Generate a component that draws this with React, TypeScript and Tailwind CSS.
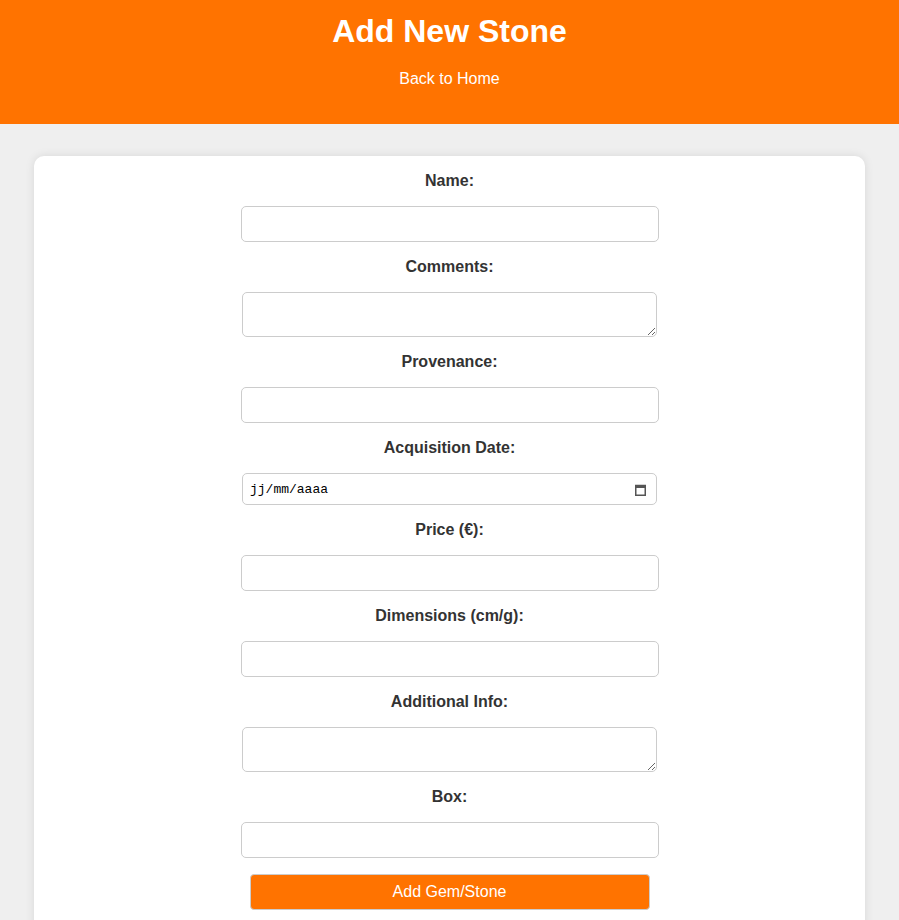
import React from "react";

const font = "font-['Liberation_Sans',Arial,sans-serif]";

const Label = ({ text, first }: { text: string; first?: boolean }) => (
  <label
    className={`block h-[18px] text-[16px] font-bold leading-[20px] text-[#333] ${first ? "" : "mt-[15px]"}`}
  >
    {text}
  </label>
);

const TextInput = () => (
  <input
    type="text"
    className="mt-[17px] h-[36px] w-[418px] rounded-[5px] border border-[#ccc] bg-white px-2 text-[16px] outline-none"
  />
);

const TextArea = () => (
  <textarea className="mt-[17px] h-[45px] w-[415px] rounded-[5px] border border-[#ccc] bg-white px-2 text-[13px] outline-none" />
);

const DateInput = () => (
  <div className="mt-[17px] flex h-[32px] w-[415px] items-center justify-between rounded-[5px] border border-[#ccc] bg-white pl-[7px] pr-[10px] pt-[1px]">
    <span className="font-['Liberation_Mono',monospace] text-[13px] text-black">jj/mm/aaaa</span>
    <svg width="11" height="12" viewBox="0 0 11 12">
      <rect x="0.75" y="1.5" width="9.5" height="9.75" fill="none" stroke="#555" strokeWidth="1.5" />
      <rect x="0" y="1" width="11" height="3" fill="#555" />
    </svg>
  </div>
);

export default function App() {
  return (
    <div className={`min-h-[920px] bg-[#efefef] ${font}`}>
      <header className="flex h-[124px] flex-col items-center bg-[#ff7300] pt-[13px]">
        <h1 className="text-[32px] font-bold leading-[37px] text-white">Add New Stone</h1>
        <a href="#" className="mt-[20px] text-[16px] leading-[18px] text-white">
          Back to Home
        </a>
      </header>

      <div className="mx-[34px] mt-[32px] rounded-[10px] bg-white pb-[30px] pt-[15px] shadow-[0_0_10px_rgba(0,0,0,0.1)]">
        <form className="flex flex-col items-center text-center">
          <Label text="Name:" first />
          <TextInput />
          <Label text="Comments:" />
          <TextArea />
          <Label text="Provenance:" />
          <TextInput />
          <Label text="Acquisition Date:" />
          <DateInput />
          <Label text="Price (€):" />
          <TextInput />
          <Label text="Dimensions (cm/g):" />
          <TextInput />
          <Label text="Additional Info:" />
          <TextArea />
          <Label text="Box:" />
          <TextInput />
          <button
            type="button"
            className="mt-[16px] h-[36px] w-[400px] rounded-[4px] border border-[#ccc] bg-[#ff7300] text-[16px] text-white"
          >
            Add Gem/Stone
          </button>
        </form>
      </div>
    </div>
  );
}
